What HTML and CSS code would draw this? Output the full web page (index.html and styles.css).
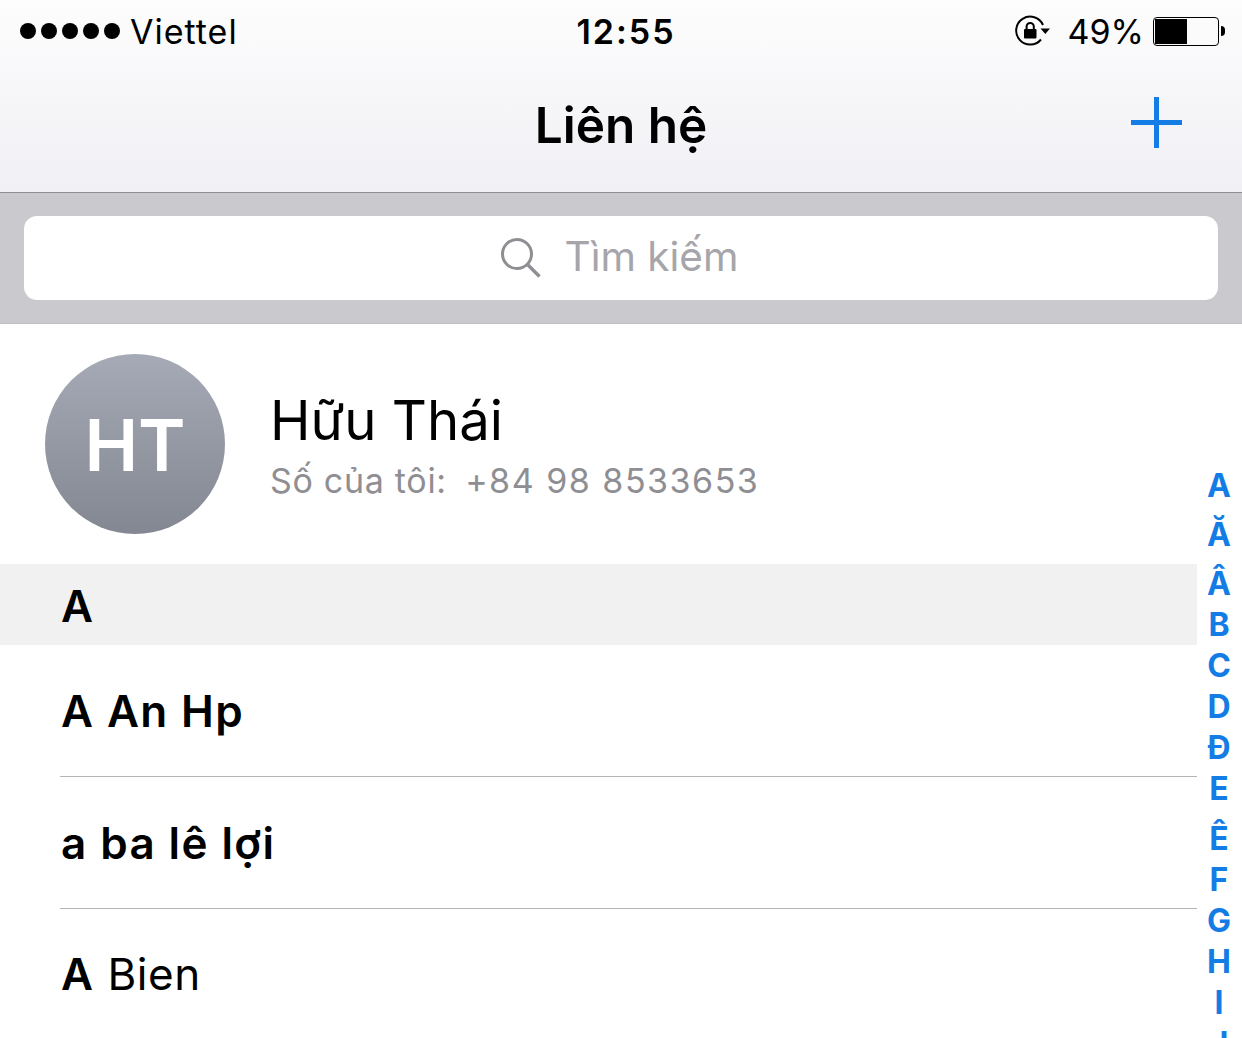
FILE: index.html
```html
<!DOCTYPE html>
<html lang="vi">
<head>
    <meta charset="UTF-8">
    <title>Liên hệ</title>
    <link rel="stylesheet" href="styles.css">
</head>
<body>
    <div class="screen">
        <header class="top-bar">
            <div class="status-bar">
                <div class="status-left">
                    <div class="signal">
                        <span class="dot"></span><span class="dot"></span><span class="dot"></span><span class="dot"></span><span class="dot"></span>
                    </div>
                    <span class="carrier">Viettel</span>
                </div>
                <div class="status-time">12:55</div>
                <div class="status-right">
                    <svg class="lock-icon" width="36" height="32" viewBox="0 0 36 32">
                        <path d="M29 10A14 14 0 1 0 27 24.5" fill="none" stroke="#000" stroke-width="2"/>
                        <path d="M26.5 13.5h9.5l-4.7 5.5z" fill="#000"/>
                        <rect x="10" y="14" width="12.5" height="9.5" rx="1" fill="#000"/>
                        <path d="M12.6 14v-2.5a3.6 3.6 0 0 1 7.2 0V14" fill="none" stroke="#000" stroke-width="2"/>
                    </svg>
                    <span class="battery-pct">49%</span>
                    <div class="battery">
                        <div class="battery-body"><div class="battery-fill"></div></div>
                        <div class="battery-tip"></div>
                    </div>
                </div>
            </div>
            <nav class="nav-bar">
                <h1>Liên hệ</h1>
                <svg class="add-icon" width="51" height="51" viewBox="0 0 51 51">
                    <rect x="0" y="23" width="51" height="5" fill="#147ce5"/>
                    <rect x="23" y="0" width="5" height="51" fill="#147ce5"/>
                </svg>
            </nav>
        </header>

        <div class="search-wrap">
            <div class="search-box">
                <svg class="search-icon" width="40" height="40" viewBox="0 0 40 40">
                    <circle cx="16" cy="16" r="14.5" fill="none" stroke="#8e8e93" stroke-width="3"/>
                    <path d="M26.5 26.5L38.5 38.5" stroke="#8e8e93" stroke-width="3.4"/>
                </svg>
                <span class="search-text">Tìm kiếm</span>
            </div>
        </div>

        <section class="my-card">
            <div class="avatar">HT</div>
            <div class="my-info">
                <div class="my-name">Hữu Thái</div>
                <div class="my-number">Số của tôi: <span class="phone">+84 98 8533653</span></div>
            </div>
        </section>

        <div class="section-head">A</div>
        <ul class="contacts">
            <li><b>A An Hp</b></li>
            <li><b>a ba lê lợi</b></li>
            <li><b>A</b> Bien</li>
        </ul>

        <div class="index">
            <span>A</span>
            <span class="tall">Ă</span>
            <span class="tall">Â</span>
            <span>B</span>
            <span>C</span>
            <span>D</span>
            <span>Đ</span>
            <span>E</span>
            <span class="tall">Ê</span>
            <span>F</span>
            <span>G</span>
            <span>H</span>
            <span>I</span>
            <span>J</span>
        </div>
    </div>
</body>
</html>
```

FILE: styles.css
```css
html, body { margin: 0; padding: 0; }
body { font-family: Inter, "Liberation Sans", sans-serif; background: white; color: #000; }
.screen { position: relative; width: 1242px; height: 1038px; overflow: hidden; }

.top-bar { height: 192px; background: linear-gradient(#fdfdfd, #f0f0f5); border-bottom: 1px solid #8f8f92; }
.status-bar { display: flex; justify-content: space-between; align-items: center; height: 62px; font-size: 34px; }
.status-left { display: flex; align-items: center; gap: 10px; padding-left: 20px; width: 390px; }
.carrier { letter-spacing: 1px; }
.signal { display: flex; gap: 5px; }
.dot { width: 16px; height: 16px; background: #000; border-radius: 50%; }
.status-time { font-weight: 600; letter-spacing: 2px; }
.status-right { display: flex; align-items: center; justify-content: flex-end; width: 400px; padding-right: 17px; box-sizing: border-box; }
.lock-icon { margin-right: 18px; }
.battery-pct { margin-right: 9px; }
.battery { display: flex; align-items: center; }
.battery-body { width: 66px; height: 29px; border: 1px solid #000; border-radius: 4px; padding: 1px; box-sizing: border-box; }
.battery-fill { width: 32px; height: 100%; background: #000; }
.battery-tip { width: 4px; height: 10px; margin-left: 2px; background: #000; border-radius: 0 5px 5px 0; }

.nav-bar { position: relative; height: 130px; display: flex; justify-content: center; align-items: center; }
.nav-bar h1 { margin: 0 0 4px 0; font-size: 49.5px; font-weight: 600; }
.add-icon { position: absolute; right: 60px; top: 35px; }

.search-wrap { background: #c9c9ce; padding: 23px 24px; border-bottom: 1px solid #bfbfc3; }
.search-box { height: 84px; background: white; border-radius: 13px; display: flex; align-items: center; justify-content: center; gap: 24px; }
.search-icon { margin-left: -3px; }
.search-text { font-size: 40.5px; color: #a5a5aa; margin-bottom: 4px; }

.my-card { display: flex; align-items: center; height: 240px; padding-left: 45px; gap: 46px; }
.avatar { width: 180px; height: 180px; border-radius: 50%; background: linear-gradient(#a5aab6, #838791); color: white; font-size: 72px; font-weight: 600; display: flex; align-items: center; justify-content: center; }
.my-info { margin: 4px 0 0 -1px; }
.my-name { font-size: 54.5px; line-height: 66px; margin: -1px 0 5px; }
.my-number { font-size: 34px; color: #8e8e93; line-height: 46px; letter-spacing: 0.7px; }
.phone { letter-spacing: 1.5px; margin-left: 8px; }

.section-head { height: 81px; width: 1197px; padding-left: 61px; box-sizing: border-box; background: #f1f1f2; font-size: 44px; font-weight: 600; line-height: 84px; }

.contacts { list-style: none; margin: 0; padding: 0 45px 0 61px; font-size: 44px; }
.contacts li { height: 131px; line-height: 133px; border-bottom: 1px solid #b4b4b6; margin-left: -1px; padding-left: 1px; letter-spacing: 0.6px; }
.contacts li:last-child { border-bottom: none; line-height: 131px; }
.contacts b { font-weight: 600; letter-spacing: 1.4px; }

.index { position: absolute; top: 464.5px; right: 0; width: 46px; display: flex; flex-direction: column; align-items: center; color: #147ce5; font-size: 32px; font-weight: 700; }
.index span { height: 41.2px; line-height: 42px; }
.index .tall { height: 49px; line-height: 58px; }
```
